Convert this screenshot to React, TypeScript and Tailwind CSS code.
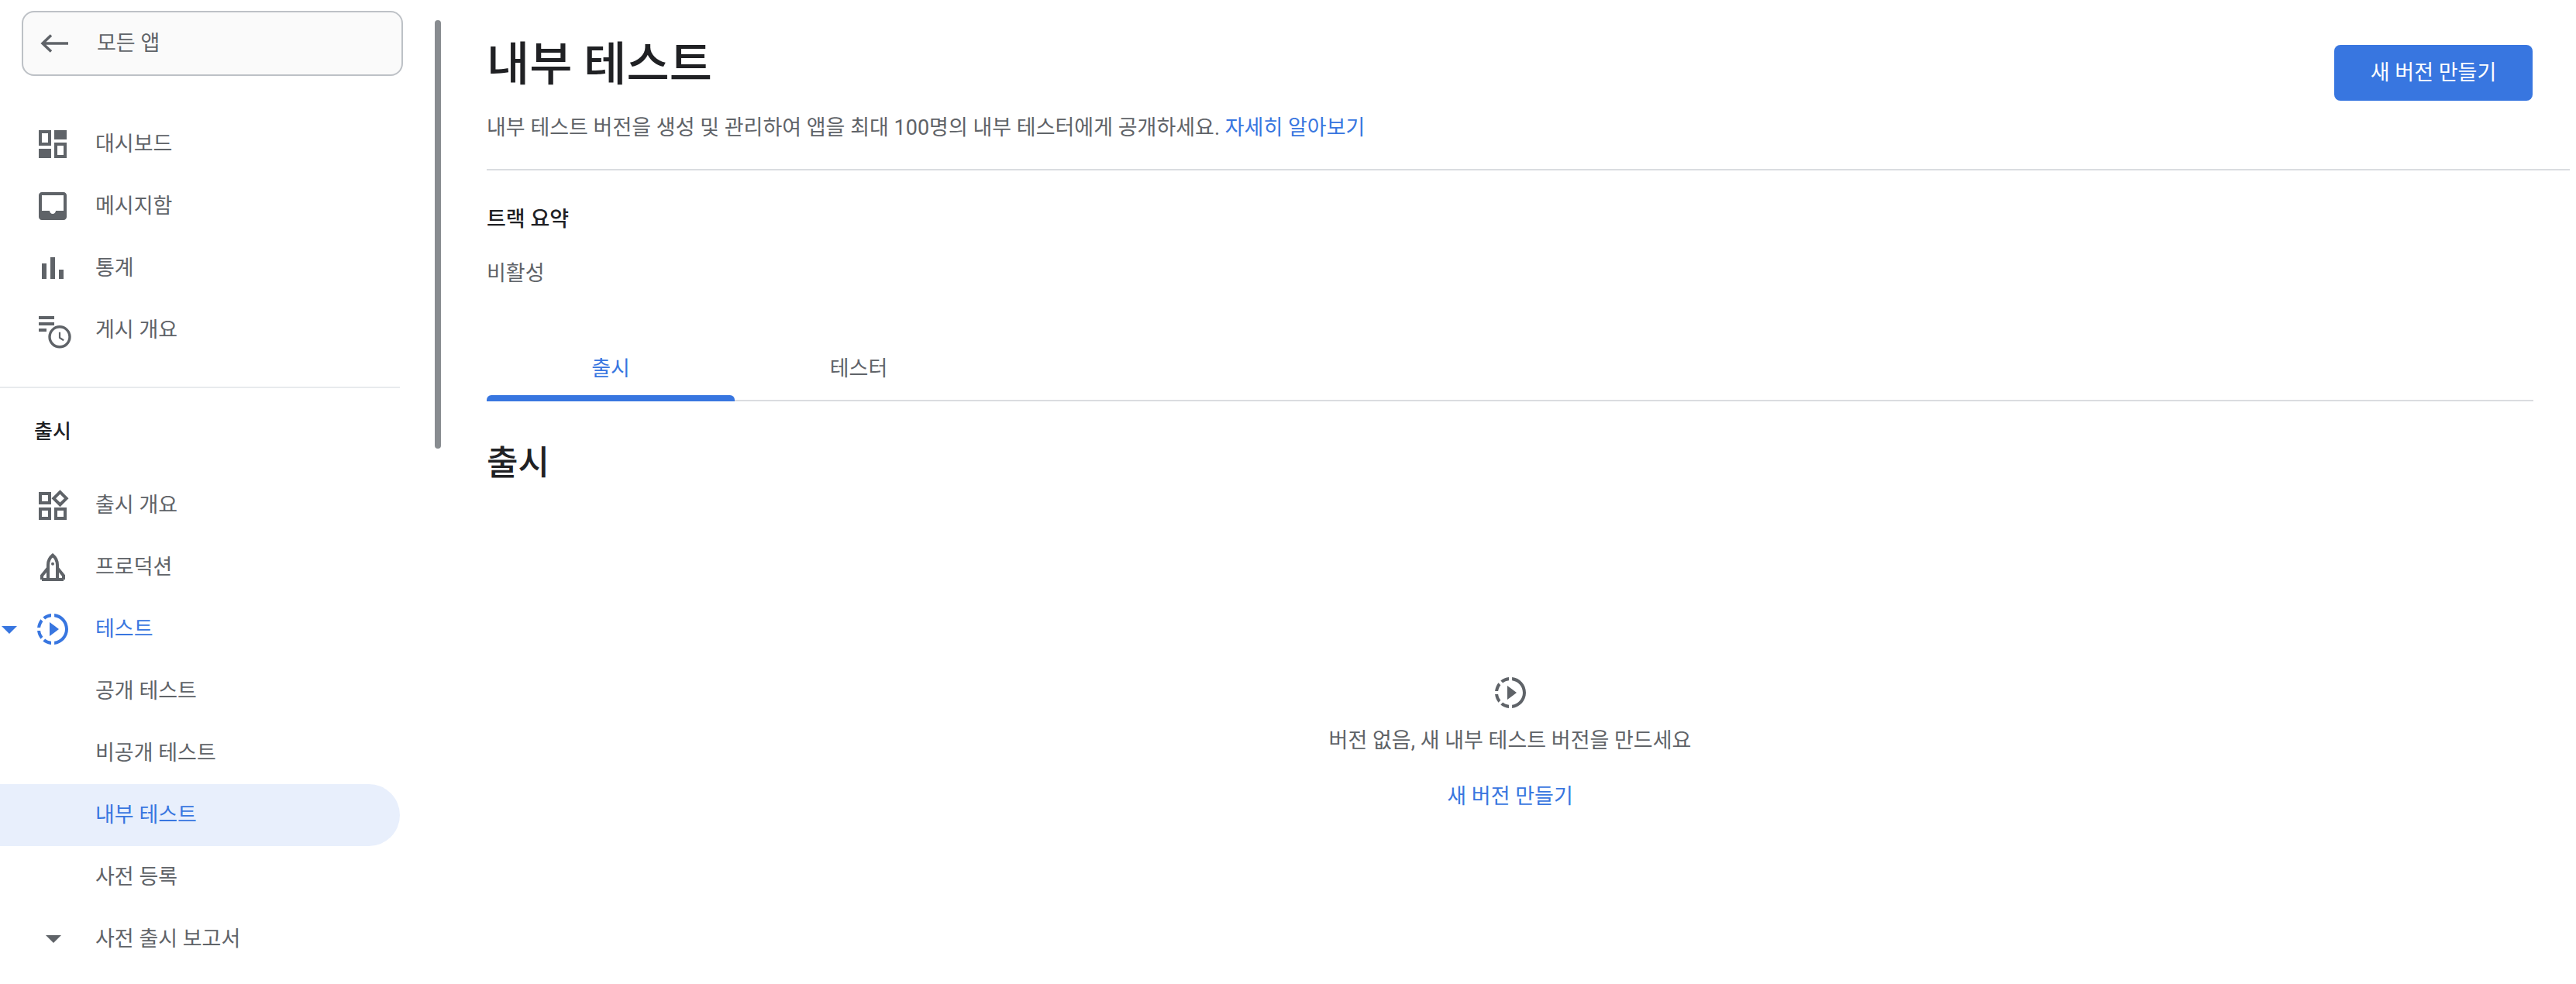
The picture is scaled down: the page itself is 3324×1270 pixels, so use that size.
const slow = "M13.05 9.79L10 7.5v9l3.05-2.29L16 12zM11 4.07V2.05c-2.01.2-3.84 1-5.32 2.21L7.1 5.69c1.11-.86 2.44-1.44 3.9-1.62zM5.69 7.1L4.26 5.68C3.05 7.16 2.25 8.99 2.05 11h2.02c.18-1.46.76-2.79 1.62-3.9zM4.07 13H2.05c.2 2.01 1 3.84 2.21 5.32l1.43-1.43c-.86-1.1-1.44-2.43-1.62-3.89zm1.61 6.74C7.16 20.95 9 21.75 11 21.95v-2.02c-1.46-.18-2.79-.76-3.9-1.62l-1.42 1.43zM22 12c0 5.16-3.92 9.42-8.95 9.95v-2.02C16.97 19.41 20 16.05 20 12s-3.03-7.41-6.95-7.93V2.05C18.08 2.58 22 6.84 22 12z";

const Ic = ({ children }: { children: React.ReactNode }) => (
  <svg viewBox="0 0 24 24" className="w-12 h-12 fill-current overflow-visible">{children}</svg>
);

const Dashboard = () => (
  <Ic>
    <path fillRule="evenodd" d="M3 3h8v10H3zM5 5v6h4V5zM13 3h8v6h-8zM3 15h8v6H3zM13 11h8v10h-8zM15 13v6h4v-6z" />
  </Ic>
);
const Inbox = () => (
  <Ic>
    <path fillRule="evenodd" d="M5 3h14c1.1 0 2 .9 2 2v14c0 1.1-.9 2-2 2H5c-1.1 0-2-.9-2-2V5c0-1.1.9-2 2-2zM5 5v10h5c0 1.1.9 2 2 2s2-.9 2-2h5V5z" />
  </Ic>
);
const Bars = () => (
  <Ic>
    <path d="M5 9h3v10H5zM10.5 5h3v14h-3zM16 13h3v6h-3z" />
  </Ic>
);
const Schedule = () => (
  <Ic>
    <path d="M3 3h10v2H3zM3 7h10v2H3zM3 11h5v2H3z" />
    <circle cx="16.5" cy="16.4" r="6.5" fill="none" stroke="currentColor" strokeWidth="1.7" />
    <path d="M16.5 13.4v3.6l2.6 1.6" fill="none" stroke="currentColor" strokeWidth="1.1" />
  </Ic>
);
const Overview = () => (
  <Ic>
    <path fillRule="evenodd" d="M3 3.5h8v8H3zM5 5.5v4h4v-4zM3 13.5h8v8H3zM5 15.5v4h4v-4zM13 13.5h8v8h-8zM15 15.5v4h4v-4zM16.75 2.1l5.5 5.5-5.5 5.5-5.5-5.5zM16.75 4.9l-2.7 2.7 2.7 2.7 2.7-2.7z" />
  </Ic>
);
const Rocket = () => (
  <Ic>
    <g fill="none" stroke="currentColor" strokeWidth="2">
      <path d="M9 20V10.5C9 8 10.2 5.8 12 4.3c1.8 1.5 3 3.7 3 6.2V20" />
      <path d="M5 20h14M9 12.5l-4 5V20M15 12.5l4 5V20" />
    </g>
    <circle cx="12" cy="9.9" r="1" />
  </Ic>
);
const Slow = () => (
  <Ic>
    <path d={slow} />
  </Ic>
);

const Caret = () => (
  <svg viewBox="0 0 20 10" className="w-5 h-2.5 fill-current">
    <path d="M0 0h20L10 10z" />
  </svg>
);

const Row = ({
  icon,
  label,
  active,
  selected,
  caret,
}: {
  icon?: React.ReactNode;
  label: string;
  active?: boolean;
  selected?: boolean;
  caret?: boolean;
}) => (
  <div
    className={`relative flex items-center h-20 w-[516px] ${active || selected ? "text-[#3876e0]" : "text-[#5f6368]"} ${selected ? "bg-[#e8effc] rounded-r-[40px]" : ""}`}
  >
    {caret && (
      <span className="absolute left-[2px] top-[36px]">
        <Caret />
      </span>
    )}
    <span className="w-[123px] pl-11 shrink-0 flex items-center">{icon}</span>
    <span className="text-[27px] leading-none">{label}</span>
  </div>
);

const Btn = "새 버전 만들기";

export default function App() {
  return (
    <div className="relative flex w-[3324px] h-[1270px] overflow-hidden bg-white font-['Roboto','Noto_Sans_CJK_KR',sans-serif]">
      <aside className="w-[628px] shrink-0 pt-[14px]">
        <div className="ml-[28px] w-[492px] h-[84px] box-border flex items-center rounded-2xl border-2 border-[#bdc1c6] bg-[#fafafa] text-[#5f6368]">
          <svg viewBox="0 0 36 24" className="ml-[22px] w-9 h-6 fill-none stroke-current" strokeWidth="3.5">
            <path d="M36 12H3M14 1.5 3 12l11 10.5" />
          </svg>
          <span className="ml-[37px] text-[27px] leading-none">모든 앱</span>
        </div>
        <div className="mt-[48px]">
          <Row icon={<Dashboard />} label="대시보드" />
          <Row icon={<Inbox />} label="메시지함" />
          <Row icon={<Bars />} label="통계" />
          <Row icon={<Schedule />} label="게시 개요" />
        </div>
        <div className="mt-[33px] w-[516px] h-0.5 bg-[#e8eaed]" />
        <div className="h-[111px] flex items-center pl-[44px] text-[26px] leading-none font-medium text-[#202124]">출시</div>
        <Row icon={<Overview />} label="출시 개요" />
        <Row icon={<Rocket />} label="프로덕션" />
        <Row icon={<Slow />} label="테스트" active caret />
        <Row label="공개 테스트" />
        <Row label="비공개 테스트" />
        <Row label="내부 테스트" selected />
        <Row label="사전 등록" />
        <Row icon={<span className="ml-[14.5px] block"><Caret /></span>} label="사전 출시 보고서" />
      </aside>

      <div className="absolute left-[561px] top-[26px] w-2 h-[553px] rounded-full bg-[#888c90]" />

      <main className="flex-1 min-w-0 pr-2">
        <header className="h-[220px] border-b-2 border-[#dadce0] flex justify-between pr-[48px]">
          <div>
            <h1 className="mt-[50px] text-[60px] leading-[68px] font-medium text-[#202124]">내부 테스트</h1>
            <p className="mt-[31px] text-[27px] leading-[32px] text-[#5f6368]">
              내부 테스트 버전을 생성 및 관리하여 앱을 최대 100명의 내부 테스터에게 공개하세요.{" "}
              <span className="text-[#3876e0]">자세히 알아보기</span>
            </p>
          </div>
          <button className="mt-[58px] w-64 h-[72px] rounded-lg bg-[#3876e0] text-white text-[27px] leading-none">{Btn}</button>
        </header>
        <div className="mr-[47px]">
          <h2 className="mt-[46px] text-[27px] leading-[34px] font-medium text-[#202124]">트랙 요약</h2>
          <p className="mt-[36px] text-[27px] leading-[34px] text-[#5f6368]">비활성</p>
          <div className="mt-[64px] flex h-[84px] border-b-2 border-[#dadce0]">
            <div className="relative w-80 flex justify-center pt-[26px] text-[27px] leading-[32px] text-[#3876e0]">
              출시
              <span className="absolute left-0 right-0 -bottom-[2px] h-2 rounded-t-md bg-[#3876e0]" />
            </div>
            <div className="w-80 flex justify-center pt-[26px] text-[27px] leading-[32px] text-[#5f6368]">테스터</div>
          </div>
          <h2 className="mt-[54px] text-[44px] leading-[52px] font-medium text-[#202124]">출시</h2>
          <div className="mt-[246px] flex flex-col items-center text-[#5f6368]">
            <Slow />
            <p className="mt-[22px] text-[27px] leading-[32px]">버전 없음, 새 내부 테스트 버전을 만드세요</p>
            <p className="mt-[40px] text-[27px] leading-[32px] text-[#3876e0]">{Btn}</p>
          </div>
        </div>
      </main>
    </div>
  );
}
